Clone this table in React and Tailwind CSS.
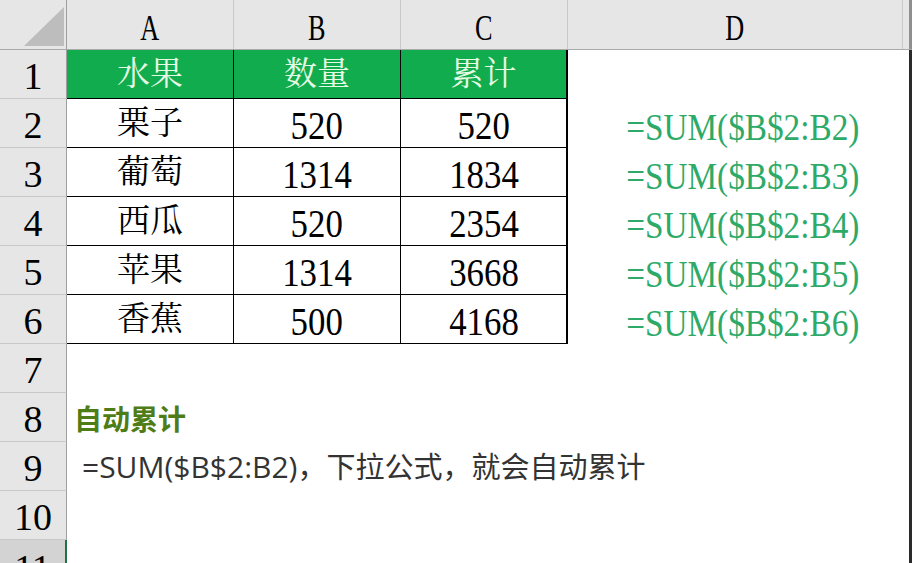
const serif = "font-[family-name:'Liberation_Serif','Noto_Serif_CJK_SC','Noto_Sans_CJK_SC',serif]";

const rows = [
  { name: '栗子', qty: '520', sum: '520', f: '=SUM($B$2:B2)' },
  { name: '葡萄', qty: '1314', sum: '1834', f: '=SUM($B$2:B3)' },
  { name: '西瓜', qty: '520', sum: '2354', f: '=SUM($B$2:B4)' },
  { name: '苹果', qty: '1314', sum: '3668', f: '=SUM($B$2:B5)' },
  { name: '香蕉', qty: '500', sum: '4168', f: '=SUM($B$2:B6)' },
];

const RowHead = ({ n }) => (
  <div className={`flex items-center justify-center bg-[#e6e6e6] border-r border-b border-r-[#9e9e9e] border-b-[#c8c8c8] text-[38px] leading-none text-black ${serif}`}>
    <span className="pt-1">{n}</span>
  </div>
);

const ColHead = ({ label }) => (
  <div className={`flex items-center justify-center border-r border-[#c9c9c9] text-[35px] leading-none text-black ${serif}`}>
    <span className="inline-block scale-x-[0.75] pt-[7px]">{label}</span>
  </div>
);

const Num = ({ v, last }) => (
  <div className={`flex items-center justify-center border-b border-black ${last ? 'border-r-2' : 'border-r'} border-r-black`}>
    <span className="inline-block scale-x-[0.85] pt-1 text-[41px] leading-none text-black font-[family-name:'Liberation_Serif',serif]">{v}</span>
  </div>
);

export default function App() {
  return (
    <div className="w-[912px] h-[563px] overflow-hidden bg-white">
      {/* column header */}
      <div className="grid grid-cols-[67px_167px_167px_167px_335px_1fr] h-[50px] bg-[#e6e6e6] border-b border-[#a9a9a9]">
        <div className="relative border-r border-[#9e9e9e]">
          <svg className="absolute left-0 top-0" width="67" height="49" viewBox="0 0 67 49">
            <polygon points="24,46 64,46 64,7" fill="#bdbdbd" />
          </svg>
        </div>
        <ColHead label="A" />
        <ColHead label="B" />
        <ColHead label="C" />
        <ColHead label="D" />
        <div className="border-r-[3px] border-[#8f8f8f]" />
      </div>

      {/* row 1 */}
      <div className="grid grid-cols-[67px_167px_167px_167px_335px_1fr] h-[49px]">
        <RowHead n="1" />
        {['水果', '数量', '累计'].map((t, i) => (
          <div
            key={t}
            className={`flex items-center justify-center bg-[#11ac4e] border-b border-black ${i === 2 ? 'border-r-2' : 'border-r'} border-r-black text-[33px] leading-none text-[#e6fae4] ${serif}`}
          >
            {t}
          </div>
        ))}
        <div />
        <div className="border-r-[3px] border-[#2a2a2a]" />
      </div>

      {/* rows 2-6 */}
      {rows.map((r, i) => (
        <div key={r.name} className="grid grid-cols-[67px_167px_167px_167px_335px_1fr] h-[49px]">
          <RowHead n={i + 2} />
          <div className={`flex items-center justify-center border-b border-r border-black text-[33px] leading-none text-black ${serif}`}>
            {r.name}
          </div>
          <Num v={r.qty} />
          <Num v={r.sum} last />
          <div className="flex items-center justify-end pr-[44px]">
            <span className="inline-block origin-right scale-x-[0.875] pt-1.5 text-[38px] leading-none text-[#2eaa68] font-[family-name:'Liberation_Serif',serif]">
              {r.f}
            </span>
          </div>
          <div className="border-r-[3px] border-[#2a2a2a]" />
        </div>
      ))}

      {/* row 7 */}
      <div className="grid grid-cols-[67px_1fr] h-[49px]">
        <RowHead n="7" />
        <div className="border-r-[3px] border-[#2a2a2a]" />
      </div>

      {/* row 8 */}
      <div className="grid grid-cols-[67px_1fr] h-[49px]">
        <RowHead n="8" />
        <div className="flex items-center pl-[7px] border-r-[3px] border-[#2a2a2a]">
          <span className="text-[28px] leading-none font-bold text-[#4e7d17] font-[family-name:'Noto_Sans_CJK_SC',sans-serif]">自动累计</span>
        </div>
      </div>

      {/* row 9 */}
      <div className="grid grid-cols-[67px_1fr] h-[49px]">
        <RowHead n="9" />
        <div className="flex items-center pl-[15px] border-r-[3px] border-[#2a2a2a] text-[#333333] leading-none font-[family-name:'Open_Sans','Noto_Sans_CJK_SC',sans-serif]">
          <span className="text-[30px]">=SUM($B$2:B2)</span>
          <span className="text-[29px]">，下拉公式，就会自动累计</span>
        </div>
      </div>

      {/* row 10 */}
      <div className="grid grid-cols-[67px_1fr] h-[49px]">
        <RowHead n="10" />
        <div className="border-r-[3px] border-[#2a2a2a]" />
      </div>

      {/* row 11, cut off by the window edge */}
      <div className="grid grid-cols-[67px_1fr] h-[49px]">
        <div className={`flex justify-center bg-[#d3d3d3] border-r-2 border-[#217346] text-[38px] leading-none text-black ${serif}`}>
          <span className="pt-[9px]">11</span>
        </div>
        <div className="border-r-[3px] border-[#2a2a2a]" />
      </div>
    </div>
  );
}
